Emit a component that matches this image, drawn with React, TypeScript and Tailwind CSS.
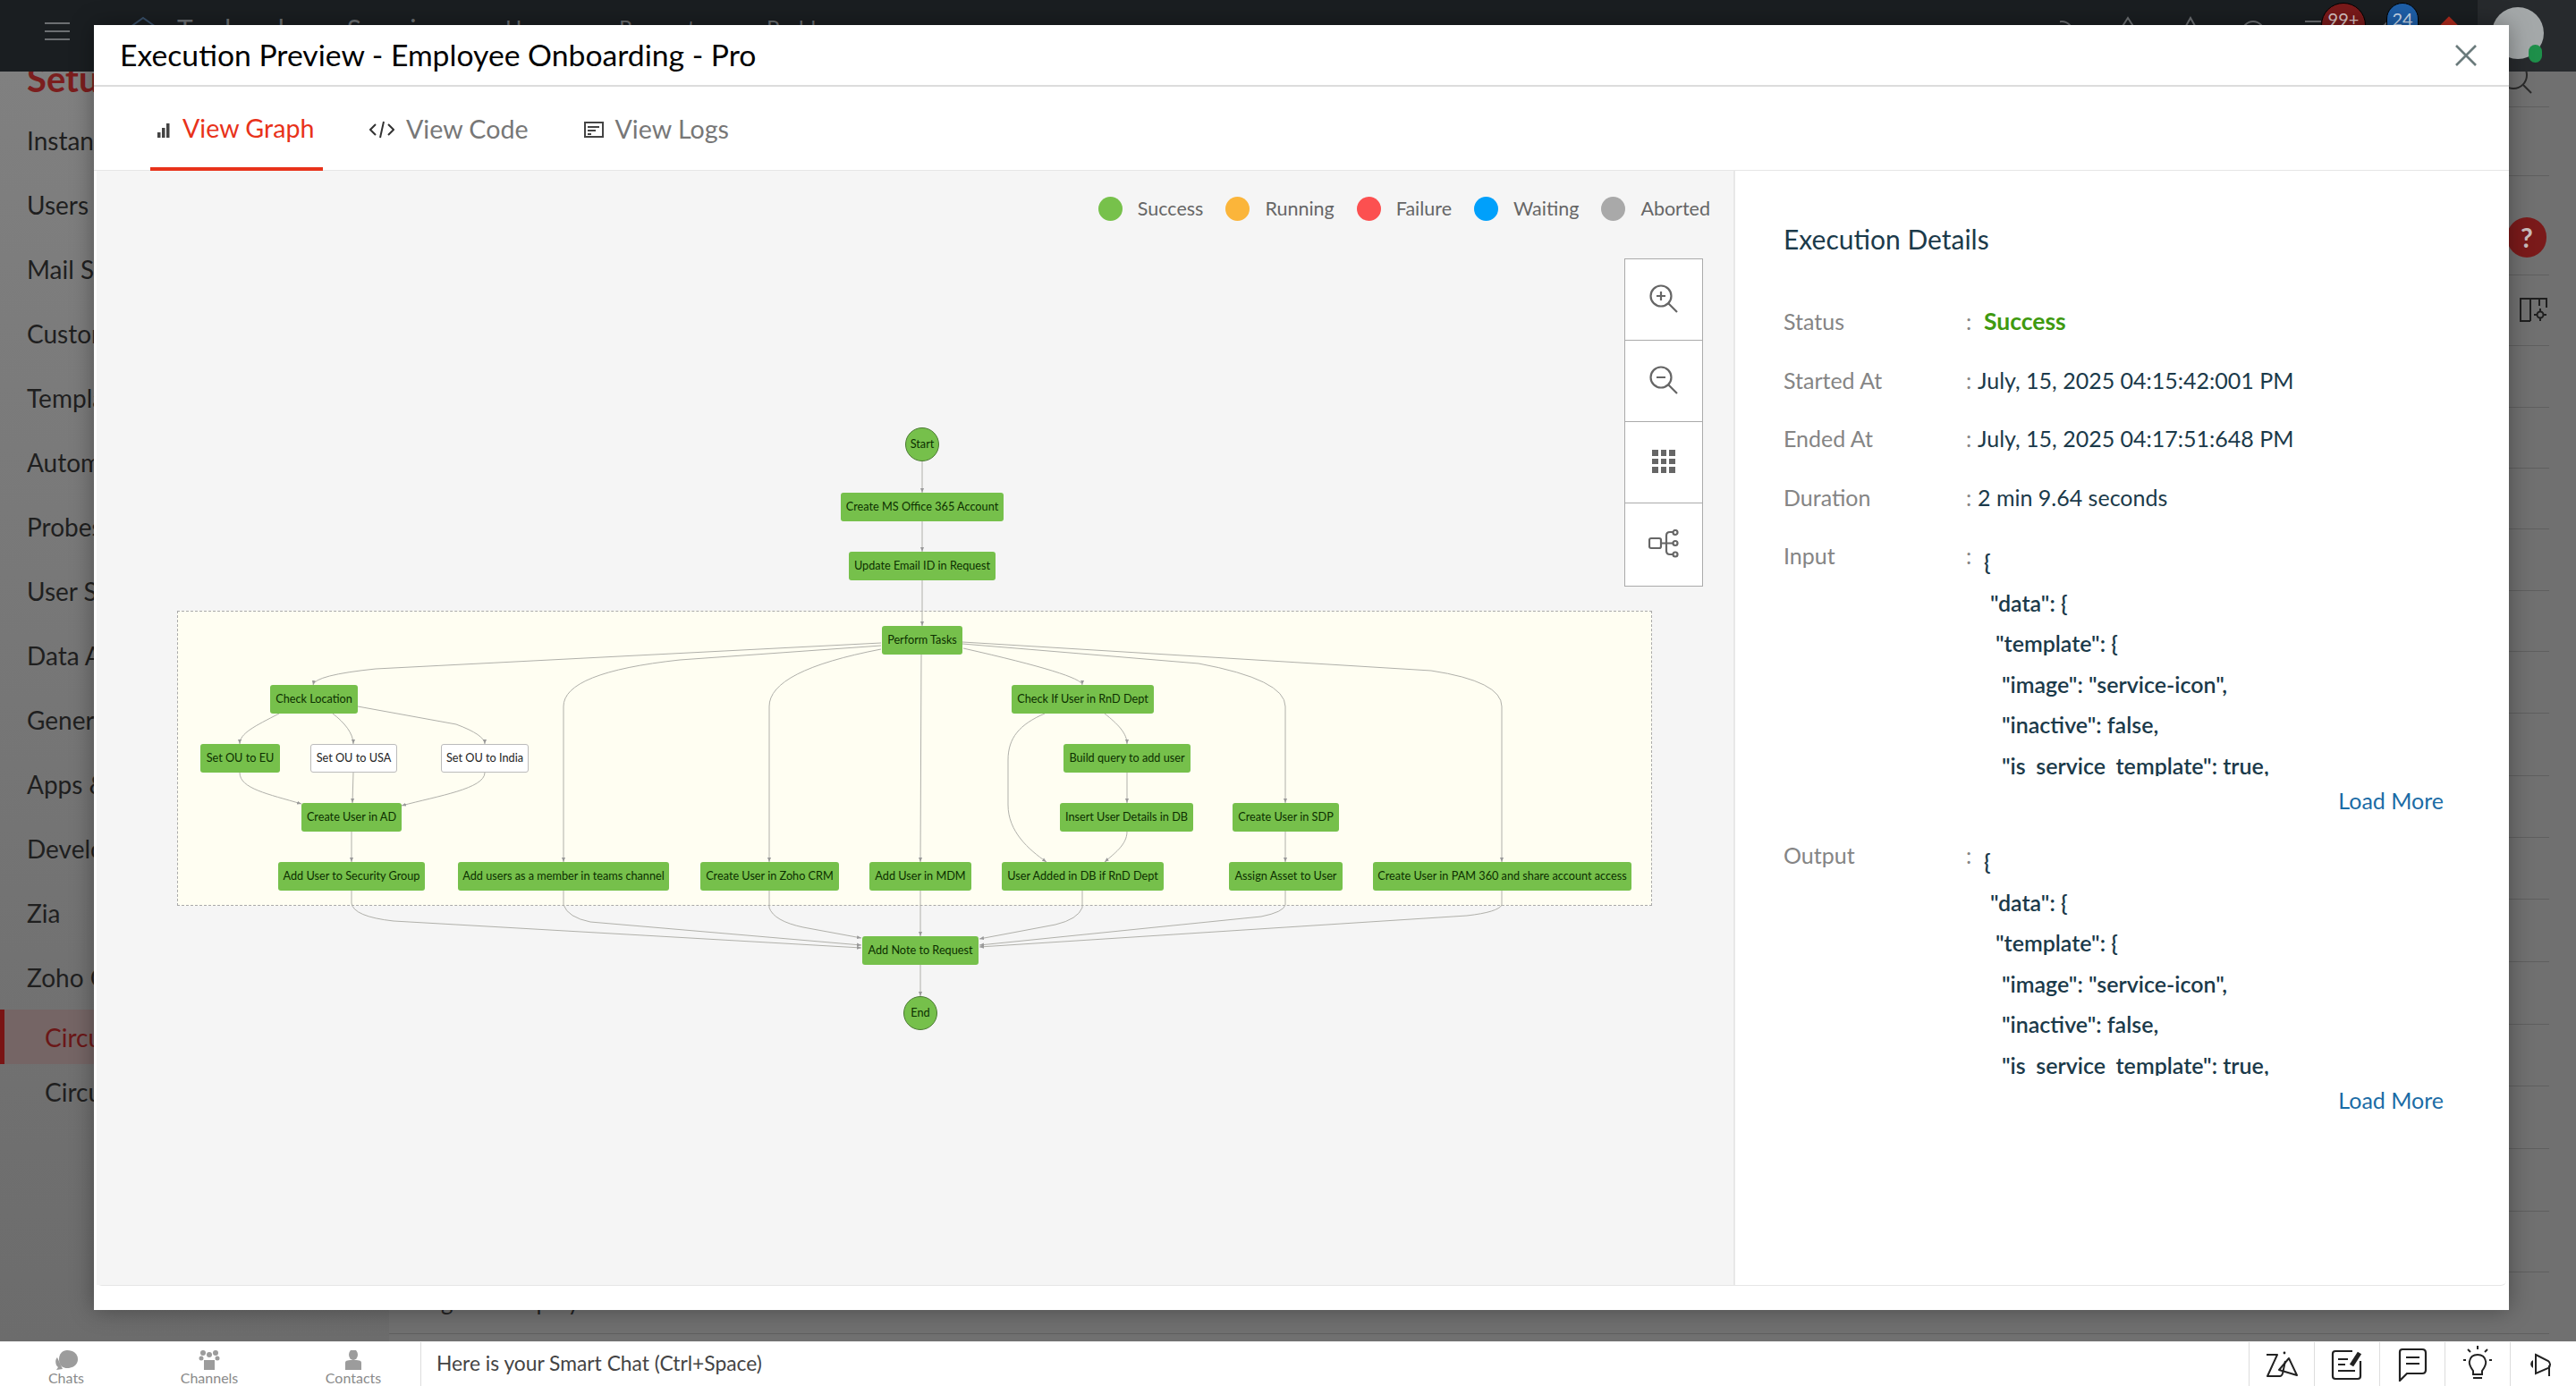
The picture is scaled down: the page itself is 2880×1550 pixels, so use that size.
import React from "react";

const OX = 108;
const OY = 191;

type N = { t: string; x: number; r: number; y: number; w?: boolean };
const nodes: N[] = [
  { t: "Create MS Office 365 Account", x: 940, r: 1122, y: 551 },
  { t: "Update Email ID in Request", x: 949, r: 1113, y: 617 },
  { t: "Perform Tasks", x: 986, r: 1076, y: 700 },
  { t: "Check Location", x: 302, r: 400, y: 766 },
  { t: "Check If User in RnD Dept", x: 1131, r: 1290, y: 766 },
  { t: "Set OU to EU", x: 224, r: 313, y: 832 },
  { t: "Set OU to USA", x: 347, r: 444, y: 832, w: true },
  { t: "Set OU to India", x: 493, r: 591, y: 832, w: true },
  { t: "Build query to add user", x: 1189, r: 1331, y: 832 },
  { t: "Create User in AD", x: 337, r: 449, y: 898 },
  { t: "Insert User Details in DB", x: 1185, r: 1334, y: 898 },
  { t: "Create User in SDP", x: 1378, r: 1497, y: 898 },
  { t: "Add User to Security Group", x: 311, r: 475, y: 964 },
  { t: "Add users as a member in teams channel", x: 512, r: 748, y: 964 },
  { t: "Create User in Zoho CRM", x: 783, r: 938, y: 964 },
  { t: "Add User in MDM", x: 972, r: 1086, y: 964 },
  { t: "User Added in DB if RnD Dept", x: 1120, r: 1301, y: 964 },
  { t: "Assign Asset to User", x: 1374, r: 1501, y: 964 },
  { t: "Create User in PAM 360 and share account access", x: 1535, r: 1824, y: 964 },
  { t: "Add Note to Request", x: 964, r: 1094, y: 1047 },
];

const edges: string[] = [
  "M1031 516V551",
  "M1031 583V617",
  "M1031 649V700",
  "M1029 1079V1114",
  "M985 719L420 748Q352 755 350 766",
  "M985 722L760 738Q630 752 630 790V964",
  "M985 726Q860 750 860 790V964",
  "M1030 732L1029 964",
  "M1077 725Q1210 755 1210 766",
  "M1076 720L1340 742Q1437 760 1437 790V898",
  "M1076 718L1600 750Q1679 762 1679 790V964",
  "M312 798C285 812 268 820 268 832",
  "M372 798C385 808 395 820 395 832",
  "M400 790L510 810Q542 822 542 832",
  "M268 864C268 882 300 888 337 899",
  "M395 864L394 898",
  "M542 864C542 882 490 890 449 901",
  "M393 930V964",
  "M1168 798C1140 810 1127 825 1127 850V900C1127 930 1150 950 1170 964",
  "M1235 798C1250 810 1260 820 1260 832",
  "M1260 864V898",
  "M1260 930C1260 945 1245 955 1235 964",
  "M1437 930V964",
  "M393 996V1010Q395 1025 440 1030L963 1060",
  "M630 996V1012Q635 1026 660 1031L963 1057",
  "M860 996V1015Q865 1030 898 1037L963 1049",
  "M1029 996V1047",
  "M1210 996V1015Q1205 1028 1180 1034L1095 1050",
  "M1437 996V1012Q1435 1020 1410 1025L1095 1057",
  "M1679 996V1012Q1675 1020 1640 1024L1095 1059",
];

const sidebar = [
  "Instances",
  "Users & Control",
  "Mail Settings",
  "Customization",
  "Templates",
  "Automation",
  "Probes",
  "User Survey",
  "Data Archiving",
  "General Settings",
  "Apps & Add-ons",
  "Developer Space",
  "Zia",
  "Zoho Circuit",
];

const gaps = [40, 77, 111, 79, 69, 68, 68, 69, 68, 69, 70, 69, 69, 70, 70, 69, 70, 70, 68, 69];

const legend = [
  ["Success", "bg-[#77c14b]"],
  ["Running", "bg-[#fbb53a]"],
  ["Failure", "bg-[#fc5050]"],
  ["Waiting", "bg-[#00a0fb]"],
  ["Aborted", "bg-[#a9a9a9]"],
];

const codeLines: [string, string][] = [
  ["{", "pl-[7px]"],
  ['"data": {', "pl-[14px]"],
  ['"template": {', "pl-[20px]"],
  ['"image": "service-icon",', "pl-[27px]"],
  ['"inactive": false,', "pl-[27px]"],
  ['"is_service_template": true,', "pl-[27px]"],
];

function Code({ label }: { label: string }) {
  return (
    <div>
      <div className="flex">
        <div className="w-[204px] h-[66px] flex items-center text-[25px] text-[#858585]">{label}</div>
        <div className="w-[13px] h-[66px] flex items-center text-[25px] text-[#858585]">:</div>
        <div className="mt-[17px] h-[262px] overflow-hidden">
          {codeLines.map(([t, p]) => (
            <div key={t} className={`h-[45.5px] leading-[45.5px] text-[25px] font-semibold text-[#1b3a4a] whitespace-nowrap ${p}`}>
              {t}
            </div>
          ))}
        </div>
      </div>
      <div className="w-[738px] text-right h-[40px] leading-[40px] mt-[7px] text-[25px] text-[#1a6ca6]">Load More</div>
    </div>
  );
}

function Row({ label, value, green }: { label: string; value: string; green?: boolean }) {
  return (
    <div className="flex items-center h-[65.5px] text-[25px]">
      <div className="w-[204px] text-[#858585]">{label}</div>
      <div className="w-[13px] text-[#858585]">:</div>
      <div className={green ? "pl-[7px] font-bold text-[26.5px] text-[#3f9a10]" : "text-[#1b3a4a]"}>{value}</div>
    </div>
  );
}

function Tool({ children, last }: { children: React.ReactNode; last?: boolean }) {
  return <div className={`h-[91px] flex items-center justify-center pb-[2px] ${last ? "" : "border-b border-[#aaa]"}`}>{children}</div>;
}

export default function App() {
  return (
    <div className="relative w-[2880px] h-[1550px] overflow-hidden flex flex-col font-['Lato','Liberation_Sans',sans-serif] bg-[#707070]">
      {/* top bar */}
      <div className="relative z-10 h-20 shrink-0 flex items-start bg-[#1a1e21]">
        <div className="ml-[50px] mt-[25px] w-7 flex flex-col gap-[7px]">
          <div className="h-[2px] bg-[#6c6f72]" />
          <div className="h-[2px] bg-[#6c6f72]" />
          <div className="h-[2px] bg-[#6c6f72]" />
        </div>
        <svg className="ml-[64px] mt-[18px]" width="36" height="36" viewBox="0 0 36 36" fill="none" stroke="#39506a" strokeWidth="2">
          <path d="M18 2L32 12V30H4V12Z" />
        </svg>
        <div className="ml-[20px] mt-[25px] w-[340px] text-[30px] leading-[14px] text-[#6c6f72] tracking-[3px] whitespace-nowrap">Technology Service</div>
        <div className="ml-[27px] mt-[25px] flex text-[24px] leading-[12px] text-[#6c6f72]">
          <span className="w-[127px]">Home</span>
          <span className="w-[165px]">Requests</span>
          <span>Problems</span>
        </div>
        <div className="flex-1" />
        <div className="relative w-[577px] h-20 shrink-0">
          <svg className="absolute left-[0px] top-[0px]" width="577" height="80" viewBox="2303 0 577 80" fill="none" stroke="#6c6f72" strokeWidth="2">
            <circle cx="2305" cy="36" r="12" />
            <path d="M2379 20L2370 34H2388Z" />
            <path d="M2449 20L2440 36H2458Z" />
            <circle cx="2519" cy="36" r="12" />
            <path d="M2577 24H2595" />
            <path d="M2672 22L2660 34" />
          </svg>
          <div className="absolute left-[292px] top-[3px] w-[50px] h-[50px] rounded-full bg-[#7a1a1a] border border-black text-[20px] leading-[34px] text-center text-[#d8c4c4]">99+</div>
          <div className="absolute left-[365px] top-[3px] w-[36px] h-[44px] rounded-full bg-[#1e5fa8] border border-black text-[20px] leading-[34px] text-center text-[#c9d7e8]">24</div>
          <div className="absolute left-[426px] top-[22px] w-[18px] h-[18px] rotate-45 bg-[#b02a1c]" />
          <div className="absolute left-[467px] top-0 w-[110px] h-20 bg-[#272a2d]" />
          <div className="absolute left-[483px] top-2 w-[58px] h-[58px] rounded-full bg-[#a4a8a9]" />
          <div className="absolute left-[524px] top-[50px] w-[15px] h-[20px] rounded-full bg-[#1e8f4a]" />
        </div>
      </div>

      {/* dimmed page */}
      <div className="flex flex-1 min-h-0">
        <div className="w-[435px] shrink-0 bg-linear-to-b from-[#808080] to-[#6c6c6c] text-[28px] text-[#1f1f1f]">
          <div className="h-[41px] pl-[30px] text-[40px] leading-[40px] font-bold text-[#7b1e1e] -mt-[12px] mb-[12px]">Setup</div>
          {sidebar.map((s) => (
            <div key={s} className="h-[72px] flex items-center pl-[30px]">
              {s}
            </div>
          ))}
          <div className="h-[61px] flex items-center pl-[50px] border-l-[5px] border-[#7a1414] bg-[#756565] text-[#6b1717]">
            <span className="-ml-[5px]">Circuit Designer</span>
          </div>
          <div className="h-[61px] flex items-center pl-[50px]">Circuit History</div>
        </div>
        <div className="flex-1 relative overflow-hidden">
          <div className="w-[2415px] flex flex-col">
            {gaps.map((g, i) => (
              <div key={i} style={{ height: g }} className="border-b border-[#5f5f5f]" />
            ))}
          </div>
          <svg className="absolute left-[2365px] top-0" width="32" height="26" viewBox="0 0 32 26" fill="none" stroke="#2a2a2a" strokeWidth="2">
            <circle cx="10" cy="4" r="15" />
            <path d="M21 15L30 24" />
          </svg>
          <div className="absolute left-[2368px] top-[163px] w-[44px] h-[45px] rounded-full bg-[#7a1a1a] flex items-center justify-center text-[30px] font-bold text-[#c9bcbc] z-0">?</div>
          <svg className="absolute left-[2382px] top-[253px]" width="32" height="27" viewBox="0 0 32 27" fill="none" stroke="#1f1f1f" strokeWidth="2">
            <path d="M12 26H1V1H30V11" />
            <path d="M12 1V26M22 1V9" />
            <circle cx="23" cy="19" r="3.5" />
            <path d="M23 12V15M23 23V26M16 19H19M27 19H30" />
          </svg>
          <div className="absolute left-[31px] top-[1360px] text-[26px] leading-[30px] text-[#222] whitespace-nowrap">Logs for Employ</div>
        </div>
      </div>

      {/* bottom bar */}
      <div className="relative z-10 h-[50px] shrink-0 flex items-stretch bg-white border-t border-[#eee]">
        <div className="w-[471px] shrink-0 flex items-start border-r border-[#ddd]">
          {[
            ["Chats", "w-[148px]"],
            ["Channels", "w-[172px]"],
            ["Contacts", "w-[150px]"],
          ].map(([l, w], i) => (
            <div key={l} className={`${w} flex flex-col items-center pt-[9px]`}>
              <svg width="28" height="22" viewBox="0 0 28 22" fill="#9c9c9c">
                {i === 0 && (
                  <>
                    <path d="M15 0C22 0 27 4 27 10C27 16 22 20 15 20C9 20 6 16 6 10C6 4 10 0 15 0Z" />
                    <path d="M4 8C1 11 2 17 5 19L3 22L10 21Z" />
                  </>
                )}
                {i === 1 && (
                  <>
                    <circle cx="7" cy="3" r="3" />
                    <circle cx="21" cy="3" r="3" />
                    <circle cx="14" cy="5" r="3" />
                    <circle cx="5" cy="9" r="2.5" />
                    <circle cx="23" cy="9" r="2.5" />
                    <path d="M8 11H20V22H8Z" />
                  </>
                )}
                {i === 2 && (
                  <>
                    <ellipse cx="14" cy="5" rx="5" ry="6" />
                    <path d="M5 14C5 11 9 11 14 11C19 11 23 11 23 14V22H5Z" />
                  </>
                )}
              </svg>
              <span className="text-[16px] leading-[16px] mt-[1px] text-[#8a8a8a]">{l}</span>
            </div>
          ))}
        </div>
        <div className="flex-1 pl-[17px] pt-[6px] text-[22.8px] leading-[34px] text-[#444] whitespace-nowrap">Here is your Smart Chat (Ctrl+Space)</div>
        <div className="flex pr-[1px]">
          <div className="w-[73px] border-l border-[#ddd] flex items-center justify-center">
            <svg width="36" height="32" viewBox="0 0 36 32" fill="none" stroke="#222" strokeWidth="2" strokeLinejoin="round">
              <path d="M1 5H13L2 29H16Q18 29 19 26L22 12" />
              <path d="M26 9L35 28L15 22Z" />
              <circle cx="21" cy="3" r="1.4" fill="#222" stroke="none" />
            </svg>
          </div>
          <div className="w-[73px] border-l border-[#ddd] flex items-center justify-center">
            <svg width="36" height="36" viewBox="0 0 36 36" fill="none" stroke="#222" strokeWidth="2.2">
              <path d="M24 3H5Q2 3 2 6V31Q2 34 5 34H30Q33 34 33 31V14" />
              <path d="M8 12H19M8 18H16M8 25H27" />
              <path d="M23 19L32 5" strokeWidth="5" />
            </svg>
          </div>
          <div className="w-[73px] border-l border-[#ddd] flex items-center justify-center">
            <svg width="34" height="38" viewBox="0 0 34 38" fill="none" stroke="#222" strokeWidth="2.2">
              <path d="M6 2H28Q32 2 32 6V25Q32 29 28 29H11L3 37V5Q3 2 6 2Z" />
              <path d="M10 11H25M10 18H25" />
            </svg>
          </div>
          <div className="w-[73px] border-l border-[#ddd] flex items-center justify-center">
            <svg width="34" height="44" viewBox="0 0 34 44" fill="none" stroke="#222" strokeWidth="2">
              <path d="M12 33V29C9 25 7 22 8 18C9 13 13 11 17 11C21 11 25 13 26 18C27 22 25 25 22 29V33Z" />
              <path d="M12 37H22M17 1V5M6 5L9 8M28 5L25 8M1 17H4M30 17H33" />
            </svg>
          </div>
          <div className="w-[73px] border-l border-[#ddd] flex items-center justify-center">
            <svg width="30" height="26" viewBox="0 0 30 26" fill="none" stroke="#222" strokeWidth="2">
              <path d="M7 2L21 9A5 5 0 0 1 21 17L7 23Z" />
              <path d="M22 14V26" />
              <path d="M4 8A5 5 0 0 0 4 17Z" fill="#222" stroke="none" />
            </svg>
          </div>
        </div>
      </div>

      {/* modal */}
      <div className="absolute z-20 left-[105px] top-[28px] w-[2700px] h-[1437px] bg-white flex flex-col shadow-[0_0_24px_rgba(0,0,0,0.35)]">
        <div className="h-[69px] shrink-0 flex items-center justify-between pl-[29px] pr-[35px] border-b-2 border-[#dcdcdc]">
          <div className="text-[33.7px] text-black whitespace-nowrap">Execution Preview - Employee Onboarding - Pro</div>
          <svg width="26" height="26" viewBox="0 0 26 26" stroke="#6b7b7c" strokeWidth="2.6">
            <path d="M2 2L24 24M24 2L2 24" />
          </svg>
        </div>
        <div className="h-[94px] shrink-0 flex items-stretch pl-[63px] border-b border-[#e6e6e6] text-[28.6px]">
          <div className="w-[193px] flex items-center pt-[2px] border-b-4 border-[#e8321a] text-[#e8321a] pl-[7px] gap-[7px] -mb-px">
            <svg width="22" height="22" viewBox="0 0 22 22" fill="#444">
              <path d="M1 16H4.5V22H1ZM6 11H9.5V22H6ZM11 6H14.5V22H11Z" />
            </svg>
            <span>View Graph</span>
          </div>
          <div className="ml-[52px] flex items-center pt-[2px] gap-[13px] text-[#777]">
            <svg width="28" height="22" viewBox="0 0 28 22" fill="none" stroke="#333" strokeWidth="2">
              <path d="M7 5L1 11L7 17M21 5L27 11L21 17M16 2L12 20" />
            </svg>
            <span>View Code</span>
          </div>
          <div className="ml-[62px] flex items-center pt-[2px] gap-[13px] text-[#777]">
            <svg width="22" height="20" viewBox="0 0 22 20" fill="none" stroke="#444" strokeWidth="2">
              <path d="M1 2H21V18H1Z" />
              <path d="M4 7H17M4 11H13M4 15H8" />
            </svg>
            <span>View Logs</span>
          </div>
        </div>
        <div className="flex-1 min-h-0 mx-[3px] mb-[27px] flex border-b border-[#e6e6e6] rounded-b-[6px]">
          <div className="relative w-[1832px] shrink-0 bg-[#f5f5f5] border-r-2 border-[#e8e8e8]">
            <div className="flex justify-end gap-[25px] pr-[26px] pt-[29px] relative z-10">
              {legend.map(([t, c]) => (
                <div key={t} className="flex items-center gap-[17px] h-[27px] text-[21.5px] text-[#666]">
                  <span className={`w-[27px] h-[27px] rounded-full ${c}`} />
                  {t}
                </div>
              ))}
            </div>
            <div className="absolute left-[90px] top-[492px] w-[1649px] h-[330px] bg-[#fffef2] border border-dashed border-[#aaa]" />
            <svg className="absolute inset-0" width="1832" height="1247" viewBox={`${OX} ${OY} 1832 1247`} fill="none" stroke="#b0b0aa" strokeWidth="1">
              <defs>
                <marker id="a" markerUnits="userSpaceOnUse" markerWidth="5" markerHeight="5" refX="5" refY="2.5" orient="auto">
                  <path d="M0 0.5L5 2.5L0 4.5Z" fill="#999" stroke="none" />
                </marker>
              </defs>
              {edges.map((d) => (
                <path key={d} d={d} markerEnd="url(#a)" />
              ))}
            </svg>
            {nodes.map((n) => (
              <div
                key={n.t}
                style={{ left: n.x - OX, top: n.y - OY, width: n.r - n.x }}
                className={`absolute h-8 flex items-center justify-center rounded-[3px] text-[12.7px] whitespace-nowrap ${
                  n.w ? "bg-white border border-[#bbb] text-[#222]" : "bg-[#76c04b] text-[#0c2f00]"
                }`}
              >
                {n.t}
              </div>
            ))}
            <div className="absolute left-[904px] top-[287px] w-[38px] h-[38px] rounded-full bg-[#76c04b] border border-[#4b7a33] flex items-center justify-center text-[12.7px] text-[#0c2f00]">Start</div>
            <div className="absolute left-[902px] top-[923px] w-[38px] h-[38px] rounded-full bg-[#76c04b] border border-[#4b7a33] flex items-center justify-center text-[12.7px] text-[#0c2f00]">End</div>
            <div className="absolute left-[1708px] top-[98px] w-[88px] h-[367px] bg-white border border-[#aaa] flex flex-col">
              <Tool>
                <svg width="34" height="34" viewBox="0 0 34 34" fill="none" stroke="#666" strokeWidth="2.2">
                  <circle cx="14" cy="14" r="11.5" />
                  <path d="M22 22L32 32M9 14H19M14 9V19" />
                </svg>
              </Tool>
              <Tool>
                <svg width="34" height="34" viewBox="0 0 34 34" fill="none" stroke="#666" strokeWidth="2.2">
                  <circle cx="14" cy="14" r="11.5" />
                  <path d="M22 22L32 32M9 14H19" />
                </svg>
              </Tool>
              <Tool>
                <div className="grid grid-cols-3 gap-[3px]">
                  {Array.from({ length: 9 }).map((_, i) => (
                    <span key={i} className="w-[6.5px] h-[6.5px] bg-[#666]" />
                  ))}
                </div>
              </Tool>
              <Tool last>
                <svg width="34" height="32" viewBox="0 0 34 32" fill="none" stroke="#666" strokeWidth="2.2">
                  <rect x="1" y="10" width="13" height="11" rx="2" />
                  <path d="M14 15.5H28M27 3H24Q20 3 20 7V24Q20 28 24 28H27" />
                  <circle cx="30" cy="3.5" r="2.5" />
                  <circle cx="30" cy="15.5" r="2.5" />
                  <circle cx="30" cy="28" r="2.5" />
                </svg>
              </Tool>
            </div>
          </div>
          <div className="flex-1 pl-[54px] pt-[56px]">
            <div className="h-[40px] leading-[40px] text-[30px] text-[#1b3a4a] mb-[40px]">Execution Details</div>
            <Row label="Status" value="Success" green />
            <Row label="Started At" value="July, 15, 2025 04:15:42:001 PM" />
            <Row label="Ended At" value="July, 15, 2025 04:17:51:648 PM" />
            <Row label="Duration" value="2 min 9.64 seconds" />
            <Code label="Input" />
            <div className="h-[9px]" />
            <Code label="Output" />
          </div>
        </div>
      </div>
    </div>
  );
}
